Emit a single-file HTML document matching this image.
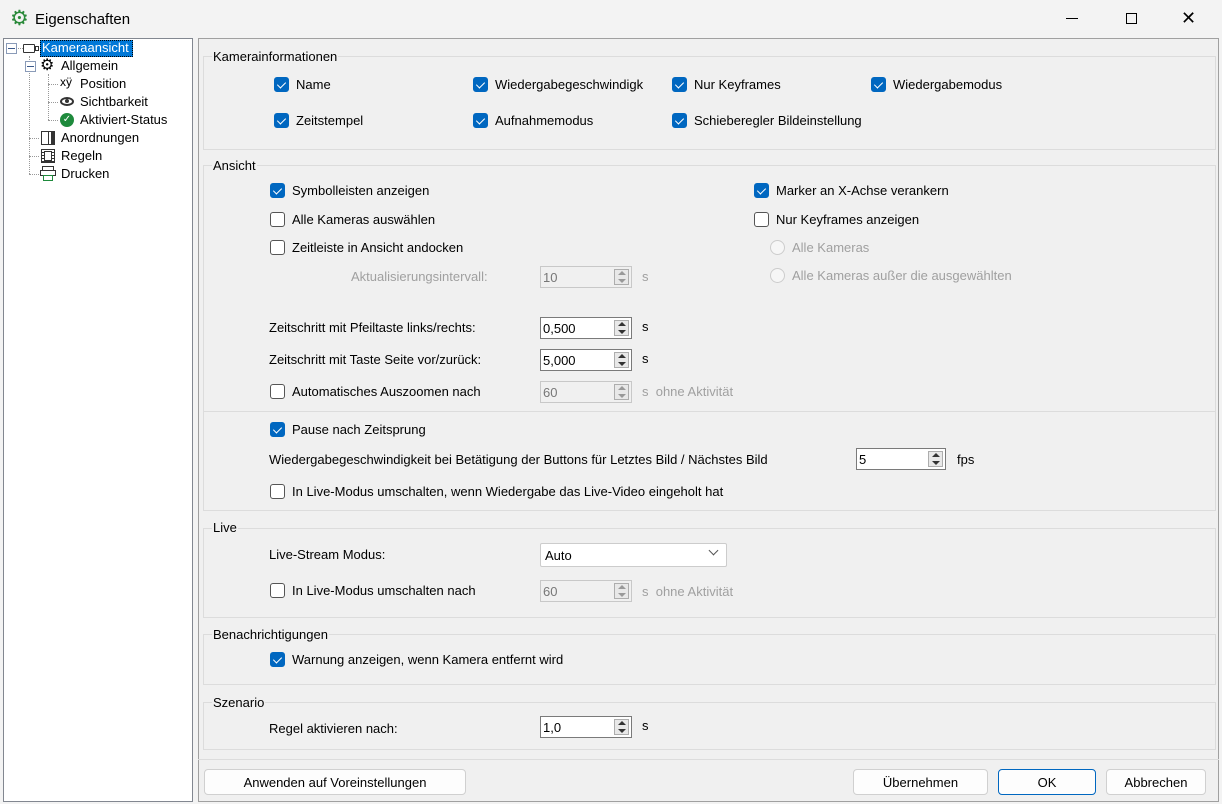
<!DOCTYPE html>
<html><head><meta charset="utf-8"><style>
*{box-sizing:border-box}
body{margin:0;width:1222px;height:804px;overflow:hidden;background:#f3f3f3;font-family:"Liberation Sans",sans-serif;font-size:13px;color:#000;position:relative}
.a{position:absolute;white-space:nowrap;line-height:18px}
.cb{position:absolute;width:15px;height:15px;border-radius:3px;border:1px solid #555;background:#fff}
.cb.on{background:#0067c0;border-color:#0067c0}
.cb.on:after{content:"";position:absolute;left:4px;top:2px;width:4px;height:7px;border:solid #fff;border-width:0 1.3px 1.3px 0;transform:rotate(45deg)}
.rd{position:absolute;width:15px;height:15px;border-radius:50%;border:1px solid #ccc;background:#f6f6f6}
.g{color:#a0a0a0}
.grp{position:absolute;left:203px;right:6px;border:1px solid #dcdcdc}
.gt{position:absolute;left:212px;background:#f0f0f0;padding:0 1px;line-height:18px}
.sp{position:absolute;width:92px;height:22px;border:1px solid #7a7a7a;background:#fff;padding:3px 0 0 2px;line-height:16px}
.sp.d{border-color:#c8c8c8;background:#f0f0f0;color:#777}
.sp i{position:absolute;right:2px;top:2px;width:15px;height:16px;border:1px solid #adadad;background:#e8e8e8}
.sp i:before{content:"";position:absolute;left:3px;top:1px;border:4px solid transparent;border-bottom:4px solid #333;border-top:0}
.sp i:after{content:"";position:absolute;left:3px;bottom:1px;border:4px solid transparent;border-top:4px solid #333;border-bottom:0}
.sp.d i:before{border-bottom-color:#999}.sp.d i:after{border-top-color:#999}
.btn{position:absolute;top:769px;height:26px;border:1px solid #d0d0d0;border-radius:4px;background:#fdfdfd;text-align:center;line-height:25px}
</style></head><body>
<div class="a" style="left:10px;top:7px;font-size:21px;color:#2a8a3a;line-height:24px">⚙</div>
<div class="a" style="left:35px;top:10px;font-size:15px;line-height:20px">Eigenschaften</div>
<div class="a" style="left:1066px;top:18px;width:12px;height:1px;background:#000"></div>
<div class="a" style="left:1126px;top:13px;width:11px;height:11px;border:1px solid #000"></div>
<div class="a" style="left:1181px;top:8px;font-size:18px;line-height:20px">✕</div>

<div class="a" style="left:3px;top:38px;width:190px;height:764px;background:#fff;border:1px solid #828790"></div>
<div class="a" style="left:6px;top:43px;width:11px;height:11px;border:1px solid #8a9bb8;background:#fff"></div>
<div class="a" style="left:8px;top:48px;width:7px;height:1px;background:#3c5a8c"></div>
<div class="a" style="left:18px;top:48px;width:5px;border-top:1px dotted #999"></div>
<div class="a" style="left:23px;top:44px;width:12px;height:9px;border:1px solid #333;border-radius:1px"></div>
<div class="a" style="left:35px;top:46px;width:4px;height:5px;border:1px solid #333"></div>
<div class="a" style="left:40px;top:40px;width:93px;height:17px;background:#0078d7;border:1px dotted #000"></div>
<div class="a" style="left:42px;top:39px;color:#fff">Kameraansicht</div>
<div class="a" style="left:29px;top:56px;height:118px;border-left:1px dotted #999"></div>
<div class="a" style="left:25px;top:61px;width:11px;height:11px;border:1px solid #8a9bb8;background:#fff"></div>
<div class="a" style="left:27px;top:66px;width:7px;height:1px;background:#3c5a8c"></div>
<div class="a" style="left:40px;top:57px;font-size:16px;line-height:18px">⚙</div>
<div class="a" style="left:61px;top:57px">Allgemein</div>
<div class="a" style="left:48px;top:74px;height:46px;border-left:1px dotted #999"></div>
<div class="a" style="left:48px;top:84px;width:10px;border-top:1px dotted #999"></div>
<div class="a" style="left:48px;top:102px;width:10px;border-top:1px dotted #999"></div>
<div class="a" style="left:48px;top:120px;width:10px;border-top:1px dotted #999"></div>
<div class="a" style="left:60px;top:76px;font-size:12px;line-height:13px">xÿ</div>
<div class="a" style="left:80px;top:75px">Position</div>
<div class="a" style="left:60px;top:97px;width:14px;height:9px;border:2px solid #333;border-radius:50%"></div>
<div class="a" style="left:65px;top:99px;width:4px;height:4px;background:#333;border-radius:50%"></div>
<div class="a" style="left:80px;top:93px">Sichtbarkeit</div>
<div class="a" style="left:60px;top:113px;width:14px;height:14px;border-radius:50%;background:#1e8a3c;color:#fff;font-size:10px;line-height:14px;text-align:center">✓</div>
<div class="a" style="left:80px;top:111px">Aktiviert-Status</div>
<div class="a" style="left:29px;top:138px;width:10px;border-top:1px dotted #999"></div>
<div class="a" style="left:29px;top:156px;width:10px;border-top:1px dotted #999"></div>
<div class="a" style="left:29px;top:174px;width:10px;border-top:1px dotted #999"></div>
<div class="a" style="left:41px;top:131px;width:14px;height:14px;border:1px solid #333;background:linear-gradient(90deg,#fff 6px,#333 6px,#333 7px,#fff 7px,#fff 9px,#333 9px)"></div>
<div class="a" style="left:61px;top:129px">Anordnungen</div>
<div class="a" style="left:41px;top:149px;width:14px;height:14px;border:1px solid #333;background:repeating-linear-gradient(#fff 0 2px,#333 2px 3px);"></div>
<div class="a" style="left:44px;top:151px;width:8px;height:10px;background:#fff;border:1px solid #333"></div>
<div class="a" style="left:61px;top:147px">Regeln</div>
<div class="a" style="left:42px;top:166px;width:12px;height:5px;border:1px solid #333"></div>
<div class="a" style="left:40px;top:170px;width:16px;height:6px;border:1px solid #333"></div>
<div class="a" style="left:43px;top:175px;width:10px;height:6px;border:1px solid #1e8a3c;background:#fff"></div>
<div class="a" style="left:61px;top:165px">Drucken</div>

<div class="a" style="left:198px;top:38px;width:1021px;height:764px;background:#f0f0f0;border:1px solid #a0a0a0"></div>

<div class="grp" style="top:56px;height:94px"></div>
<div class="gt" style="top:48px">Kamerainformationen</div>
<div class="cb on" style="left:274px;top:77px"></div><div class="a" style="left:296px;top:76px">Name</div>
<div class="cb on" style="left:473px;top:77px"></div><div class="a" style="left:495px;top:76px">Wiedergabegeschwindigk</div>
<div class="cb on" style="left:672px;top:77px"></div><div class="a" style="left:694px;top:76px">Nur Keyframes</div>
<div class="cb on" style="left:871px;top:77px"></div><div class="a" style="left:893px;top:76px">Wiedergabemodus</div>
<div class="cb on" style="left:274px;top:113px"></div><div class="a" style="left:296px;top:112px">Zeitstempel</div>
<div class="cb on" style="left:473px;top:113px"></div><div class="a" style="left:495px;top:112px">Aufnahmemodus</div>
<div class="cb on" style="left:672px;top:113px"></div><div class="a" style="left:694px;top:112px">Schieberegler Bildeinstellung</div>

<div class="grp" style="top:165px;height:346px"></div>
<div class="a" style="left:204px;top:411px;width:1012px;height:1px;background:#dcdcdc"></div>
<div class="gt" style="top:157px">Ansicht</div>
<div class="cb on" style="left:270px;top:183px"></div><div class="a" style="left:292px;top:182px">Symbolleisten anzeigen</div>
<div class="cb on" style="left:754px;top:183px"></div><div class="a" style="left:776px;top:182px">Marker an X-Achse verankern</div>
<div class="cb" style="left:270px;top:212px"></div><div class="a" style="left:292px;top:211px">Alle Kameras auswählen</div>
<div class="cb" style="left:754px;top:212px"></div><div class="a" style="left:776px;top:211px">Nur Keyframes anzeigen</div>
<div class="cb" style="left:270px;top:240px"></div><div class="a" style="left:292px;top:239px">Zeitleiste in Ansicht andocken</div>
<div class="rd" style="left:770px;top:240px"></div><div class="a g" style="left:792px;top:239px">Alle Kameras</div>
<div class="a g" style="left:351px;top:268px">Aktualisierungsintervall:</div>
<div class="sp d" style="left:540px;top:266px">10<i></i></div><div class="a g" style="left:642px;top:268px">s</div>
<div class="rd" style="left:770px;top:268px"></div><div class="a g" style="left:792px;top:267px">Alle Kameras außer die ausgewählten</div>
<div class="a" style="left:269px;top:319px">Zeitschritt mit Pfeiltaste links/rechts:</div>
<div class="sp" style="left:540px;top:317px">0,500<i></i></div><div class="a" style="left:642px;top:318px">s</div>
<div class="a" style="left:269px;top:351px">Zeitschritt mit Taste Seite vor/zurück:</div>
<div class="sp" style="left:540px;top:349px">5,000<i></i></div><div class="a" style="left:642px;top:350px">s</div>
<div class="cb" style="left:270px;top:384px"></div><div class="a" style="left:292px;top:383px">Automatisches Auszoomen nach</div>
<div class="sp d" style="left:540px;top:381px">60<i></i></div><div class="a g" style="left:642px;top:383px">s&nbsp; ohne Aktivität</div>
<div class="cb on" style="left:270px;top:422px"></div><div class="a" style="left:292px;top:421px">Pause nach Zeitsprung</div>
<div class="a" style="left:269px;top:451px">Wiedergabegeschwindigkeit bei Betätigung der Buttons für Letztes Bild / Nächstes Bild</div>
<div class="sp" style="left:856px;top:448px;width:90px">5<i></i></div><div class="a" style="left:957px;top:451px">fps</div>
<div class="cb" style="left:270px;top:484px"></div><div class="a" style="left:292px;top:483px">In Live-Modus umschalten, wenn Wiedergabe das Live-Video eingeholt hat</div>

<div class="grp" style="top:528px;height:90px"></div>
<div class="gt" style="top:519px">Live</div>
<div class="a" style="left:269px;top:546px">Live-Stream Modus:</div>
<div class="a" style="left:540px;top:543px;width:187px;height:24px;border:1px solid #ccc;background:#fff;border-radius:2px;padding:3px 0 0 4px;line-height:18px">Auto</div>
<div class="a" style="left:710px;top:547px;width:7px;height:7px;border:solid #555;border-width:0 1px 1px 0;transform:rotate(45deg)"></div>
<div class="cb" style="left:270px;top:583px"></div><div class="a" style="left:292px;top:582px">In Live-Modus umschalten nach</div>
<div class="sp d" style="left:540px;top:580px">60<i></i></div><div class="a g" style="left:642px;top:583px">s&nbsp; ohne Aktivität</div>

<div class="grp" style="top:634px;height:51px"></div>
<div class="gt" style="top:626px">Benachrichtigungen</div>
<div class="cb on" style="left:270px;top:652px"></div><div class="a" style="left:292px;top:651px">Warnung anzeigen, wenn Kamera entfernt wird</div>

<div class="grp" style="top:702px;height:48px"></div>
<div class="gt" style="top:694px">Szenario</div>
<div class="a" style="left:269px;top:720px">Regel aktivieren nach:</div>
<div class="sp" style="left:540px;top:716px">1,0<i></i></div><div class="a" style="left:642px;top:717px">s</div>

<div class="a" style="left:198px;top:759px;width:1021px;height:1px;background:#dcdcdc"></div>
<div class="btn" style="left:204px;width:262px">Anwenden auf Voreinstellungen</div>
<div class="btn" style="left:853px;width:135px">Übernehmen</div>
<div class="btn" style="left:998px;width:98px;border-color:#0067c0">OK</div>
<div class="btn" style="left:1106px;width:100px">Abbrechen</div>
</body></html>
